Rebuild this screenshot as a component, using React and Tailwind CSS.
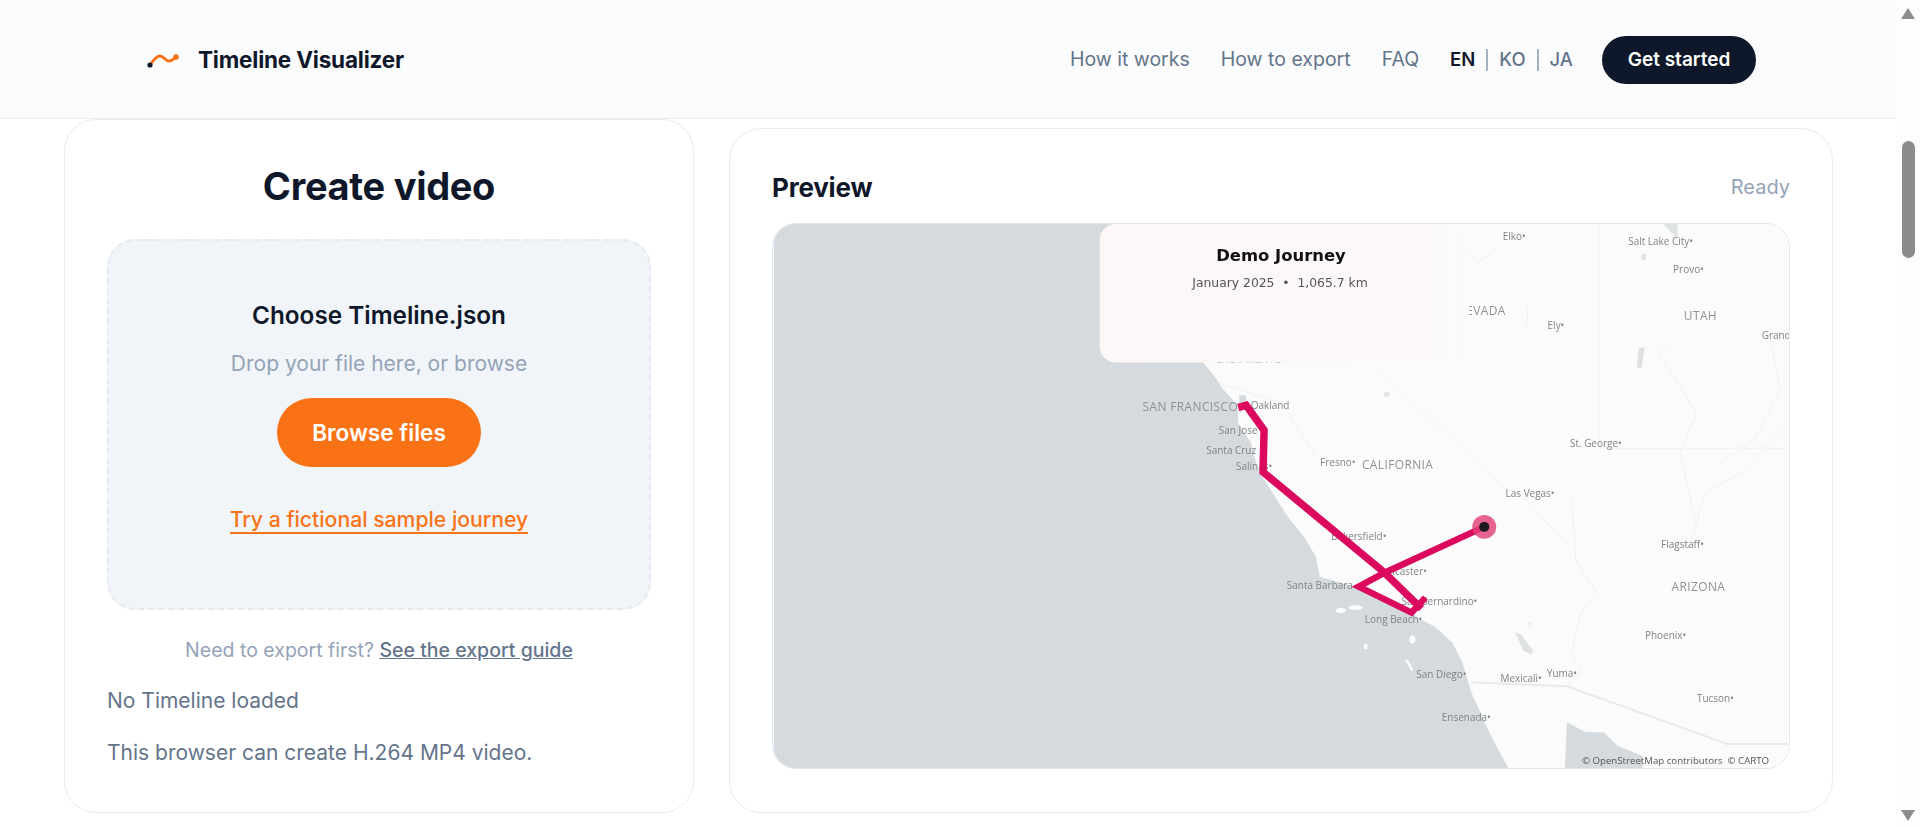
import React from 'react';

const labels = [
  ['Elko•', 743, 13],
  ['Salt Lake City•', 890, 18],
  ['Provo•', 918, 47],
  ['Ely•', 785, 103],
  ['Grand', 1006, 113],
  ['SACRAMENTO•', 479, 137],
  ['Oakland', 498, 183],
  ['San Jose', 466, 208],
  ['Santa Cruz', 459, 228],
  ['Salinas•', 482, 244],
  ['Fresno•', 566, 240],
  ['St. George•', 825, 221],
  ['Las Vegas•', 759, 271],
  ['Bakersfield•', 587, 314],
  ['Lancaster•', 631, 350],
  ['Santa Barbara', 548, 364],
  ['San Bernardino•', 668, 380],
  ['Long Beach•', 622, 398],
  ['San Diego•', 670, 453],
  ['Mexicali•', 750, 457],
  ['Yuma•', 791, 452],
  ['Flagstaff•', 912, 323],
  ['Phoenix•', 895, 414],
  ['Tucson•', 945, 477],
  ['Ensenada•', 695, 496],
];

const regions = [
  ['NEVADA', 710, 88],
  ['UTAH', 930, 93],
  ['SAN FRANCISCO', 418, 184],
  ['CALIFORNIA', 626, 243],
  ['ARIZONA', 928, 365],
];

const JourneyMap = () => {
  return (
    <svg viewBox="0 0 1018 546" className="block w-full h-full blur-[0.5px]">
      <rect width="1018" height="546" fill="#fbfbfb" />
      {/* sea */}
      <path
        fill="#d4dadd"
        d="M0 0H430V139L431 139L443 154L452 167L460 176L466 187L466 200L479 220L486 247L505 277L516 294L532 314L544 334L548 354L583 364L613 374L640 392L663 404L681 420L691 440L700 470L718 510L737 546H0Z"
      />
      <path fill="#d4dadd" d="M796 500L815 510L833 510L847 524L872 534V546H794Z" />
      <path fill="#d4dadd" d="M467 172L474 172L474 182L468 190Z" />
      {/* islands */}
      <g fill="#fbfbfb">
        <ellipse cx="569" cy="388" rx="5" ry="2.5" />
        <ellipse cx="584" cy="385" rx="7" ry="2.5" />
        <ellipse cx="641" cy="417" rx="3" ry="4" />
        <ellipse cx="594" cy="424" rx="2" ry="3" />
        <path d="M633 437L637 438L642 448L640 449Z" />
      </g>
      {/* lakes */}
      <g fill="#dfe2e3">
        <path d="M744 410L750 412L762 428L760 432L752 428Z" />
        <path d="M893 0H907V14L900 8Z" />
        <path d="M871 30L875 30L875 36L871 36Z" />
        <path d="M868 124L874 124L871 145L866 144Z" />
        <path d="M758 400L760 400L759 405Z" />
      </g>
      <circle cx="615" cy="171" r="3" fill="#e4e6e6" />
      {/* borders and rivers */}
      <g fill="none" stroke="#f0f0f0" strokeWidth="1">
        <path d="M829 0V225M829 225H1018" />
        <path d="M608 147L727 260L755 277L801 327" />
        <path d="M801 277L805 337L826 370L810 390L801 430L810 450L796 464" />
        <path d="M692 20L705 38L715 34L725 25M757 82L756 100" />
        <path d="M905 115L888 130L926 190L910 230L925 300M1018 200L970 250L935 270L920 320" />
        <path d="M447 160L510 180L545 235M1000 115L1010 165L985 215L950 240" />
      </g>
      <path d="M700 460L796 464L957 522H1018" fill="none" stroke="#e9e9e9" strokeWidth="2" />
      {/* labels */}
      <g fontFamily="'Open Sans', sans-serif" fill="#7f8487" textAnchor="middle" dominantBaseline="middle">
        {labels.map(([name, x, y]) => (
          <text key={name} x={x} y={y} fontSize="10">{name}</text>
        ))}
        {regions.map(([name, x, y]) => (
          <text key={name} x={x} y={y} fontSize="12" letterSpacing="0.4" fill="#8d9295">{name}</text>
        ))}
      </g>
      {/* title box */}
      <defs>
        <linearGradient id="boxFade" x1="0" x2="1" y1="0" y2="0">
          <stop offset="0" stopColor="#fdf7f7" />
          <stop offset="0.8" stopColor="#fdf8f8" />
          <stop offset="1" stopColor="#fbfafa" />
        </linearGradient>
      </defs>
      <rect x="327" y="0" width="371" height="139" rx="16" fill="url(#boxFade)" />
      <text x="509" y="33" fontFamily="'DejaVu Sans', sans-serif" fontWeight="700" fontSize="16.5" fill="#111" textAnchor="middle" dominantBaseline="middle">Demo Journey</text>
      <text x="508" y="60" fontFamily="'DejaVu Sans', sans-serif" fontSize="12.4" fill="#555" textAnchor="middle" dominantBaseline="middle" xmlSpace="preserve">January 2025  •  1,065.7 km</text>
      {/* route */}
      <polyline
        points="466,184 474,182 492,207 491,249 613,350 650,386"
        fill="none"
        stroke="#dc0a5e"
        strokeWidth="7.5"
        strokeLinejoin="miter"
      />
      <polyline
        points="654,375 640,390 587,364 613,350 713,304"
        fill="none"
        stroke="#dc0a5e"
        strokeWidth="6.5"
        strokeLinejoin="miter"
      />
      <circle cx="713" cy="304" r="12" fill="#e23d78" fillOpacity="0.8" />
      <circle cx="713" cy="304" r="5" fill="#1d1a1f" />
      <text x="905" y="542" fontFamily="'Open Sans', sans-serif" fontSize="9.7" fill="#555" textAnchor="middle" xmlSpace="preserve">© OpenStreetMap contributors  © CARTO</text>
    </svg>
  );
};

const Logo = () => {
  return (
    <svg width="34" height="20" viewBox="0 0 34 20" fill="none">
      <path d="M4 15C8 9 11 6 14 6C18 6 19 11 23 11C26 11 28 9 30 7" stroke="#f97316" strokeWidth="2.8" strokeLinecap="round" />
      <circle cx="30" cy="7" r="2.8" fill="#f97316" />
      <circle cx="4" cy="15" r="2.6" fill="#0f172a" />
    </svg>
  );
};

const Header = () => {
  return (
    <header className="h-[119px] shrink-0 pt-[2px] flex items-center justify-between pl-[146px] pr-[140px] bg-gradient-to-b from-[#fbfcfe] to-[#fbfbfb] border-b border-[#ececec]">
      <div className="flex items-center gap-[18px]">
        <Logo />
        <span className="text-[22.5px] font-bold tracking-[-0.2px] text-[#0f172a]">Timeline Visualizer</span>
      </div>
      <nav className="flex items-center text-[19.5px] text-[#64748b]">
        <a className="mr-[31px]">How it works</a>
        <a className="mr-[31px]">How to export</a>
        <a className="mr-[31px]">FAQ</a>
        <div className="flex items-center mr-[29px] text-[18.5px] font-medium">
          <span className="font-semibold text-[#0f172a]">EN</span>
          <span className="w-0.5 h-[22px] mx-[11px] bg-[#a4b1c4]"></span>
          <span>KO</span>
          <span className="w-0.5 h-[22px] mx-[11px] bg-[#a4b1c4]"></span>
          <span>JA</span>
        </div>
        <button className="w-[154px] h-12 rounded-full bg-[#0f172a] text-white text-[19px] font-semibold">Get started</button>
      </nav>
    </header>
  );
};

const CreateCard = () => {
  return (
    <section className="h-[694px] bg-white border border-[#e9edf2] rounded-[32px] px-[42px]">
      <h1 className="mt-[40px] text-center text-[38px] leading-[52px] font-bold tracking-[-0.3px] text-[#0f172a]">Create video</h1>
      <div className="mt-[27px] h-[371px] bg-[#f1f5f9] border-2 border-dashed border-[#e5eaf0] rounded-[28px] flex flex-col items-center">
        <h2 className="mt-[58px] text-[24.3px] leading-8 font-semibold text-[#0f172a]">Choose Timeline.json</h2>
        <p className="mt-[19px] text-[21px] leading-7 text-[#94a3b8]">Drop your file here, or browse</p>
        <button className="mt-[20px] w-[204px] h-[69px] rounded-full bg-[#f97316] text-white text-[22.6px] font-semibold">Browse files</button>
        <a className="mt-[39px] text-[21.2px] leading-[26px] font-medium text-[#f97316] border-b-2 border-[#f97316]">Try a fictional sample journey</a>
      </div>
      <p className="mt-[26px] text-center text-[19.5px] leading-7 text-[#94a3b8]">
        Need to export first? <a className="font-medium text-[#64748b] underline">See the export guide</a>
      </p>
      <p className="mt-[23px] text-[21px] leading-7 text-[#64748b]">No Timeline loaded</p>
      <p className="mt-6 text-[21px] leading-7 text-[#64748b]">This browser can create H.264 MP4 video.</p>
    </section>
  );
};

const PreviewCard = () => {
  return (
    <section className="h-[685px] bg-white border border-[#e9edf2] rounded-[32px] px-[42px]">
      <div className="mt-[40px] h-[36px] flex items-center justify-between">
        <h2 className="text-[26px] font-bold tracking-[-0.2px] text-[#0f172a]">Preview</h2>
        <span className="text-[20px] text-[#94a3b8]">Ready</span>
      </div>
      <div className="mt-[18px] h-[546px] rounded-[24px] border border-[#e2e8f0] overflow-hidden">
        <JourneyMap />
      </div>
    </section>
  );
};

const Scrollbar = () => {
  return (
    <aside className="w-6 shrink-0 h-full bg-[#fdfdfd] flex flex-col items-center">
      <svg className="mt-2 shrink-0" width="14" height="11" viewBox="0 0 14 11"><path d="M7 0L14 11H0Z" fill="#8c8c8c" /></svg>
      <div className="mt-[122px] w-[13px] h-[117px] rounded-full bg-[#8c8c8c]"></div>
      <svg className="mt-auto mb-[6px] shrink-0" width="14" height="11" viewBox="0 0 14 11"><path d="M7 11L14 0H0Z" fill="#8c8c8c" /></svg>
    </aside>
  );
};

const App = () => {
  return (
    <div className="h-[827px] w-full overflow-hidden flex bg-white font-[family-name:Inter,sans-serif]">
      <div className="flex-1 min-w-0 flex flex-col">
        <Header />
        <main className="grid grid-cols-[630px_1104px] gap-x-[35px] items-end pl-16">
          <CreateCard />
          <PreviewCard />
        </main>
      </div>
      <Scrollbar />
    </div>
  );
};

export default App;
